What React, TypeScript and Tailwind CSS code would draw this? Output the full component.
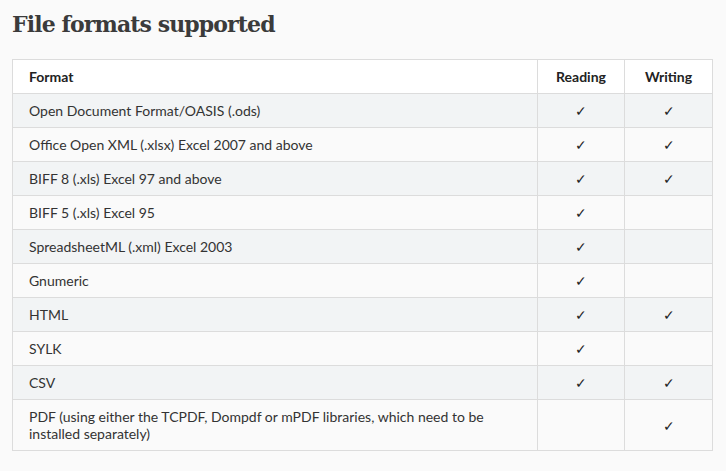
const ROWS: { name: string; read: boolean; write: boolean }[] = [
  { name: "Open Document Format/OASIS (.ods)", read: true, write: true },
  { name: "Office Open XML (.xlsx) Excel 2007 and above", read: true, write: true },
  { name: "BIFF 8 (.xls) Excel 97 and above", read: true, write: true },
  { name: "BIFF 5 (.xls) Excel 95", read: true, write: false },
  { name: "SpreadsheetML (.xml) Excel 2003", read: true, write: false },
  { name: "Gnumeric", read: true, write: false },
  { name: "HTML", read: true, write: true },
  { name: "SYLK", read: true, write: false },
  { name: "CSV", read: true, write: true },
  {
    name: "PDF (using either the TCPDF, Dompdf or mPDF libraries, which need to be installed separately)",
    read: false,
    write: true,
  },
];

export default function App() {
  return (
    <div className="min-h-[471px] w-[726px] bg-[#fafafa] px-3 pt-[8px] font-['Lato','Liberation_Sans',sans-serif] text-[#333]">
      <h1 className="font-['DejaVu_Serif',serif] text-[22px] leading-[32px] font-bold tracking-[-0.9px] text-[#3b3b3b]">
        File formats supported
      </h1>

      <table className="mt-[19px] w-[701px] border-collapse text-[14px] leading-[17px]">
        <thead>
          <tr className="h-[34px] bg-white">
            <th className="border border-[#dcdcdc] pl-[16px] text-left font-bold text-[#222]">Format</th>
            <th className="w-[87px] border border-[#dcdcdc] text-center font-bold text-[#222]">Reading</th>
            <th className="w-[88px] border border-[#dcdcdc] text-center font-bold text-[#222]">Writing</th>
          </tr>
        </thead>
        <tbody>
          {ROWS.map((row, i) => (
            <tr
              key={row.name}
              className={i % 2 === 0 ? "h-[34px] bg-[#f2f4f5]" : "h-[34px] bg-[#fafafa]"}
            >
              <td className="border border-[#dcdcdc] py-[8px] pl-[16px] pr-[28px]">{row.name}</td>
              <td className="border border-[#dcdcdc] text-center text-[#222]">{row.read ? "✓" : ""}</td>
              <td className="border border-[#dcdcdc] text-center text-[#222]">{row.write ? "✓" : ""}</td>
            </tr>
          ))}
        </tbody>
      </table>
    </div>
  );
}
